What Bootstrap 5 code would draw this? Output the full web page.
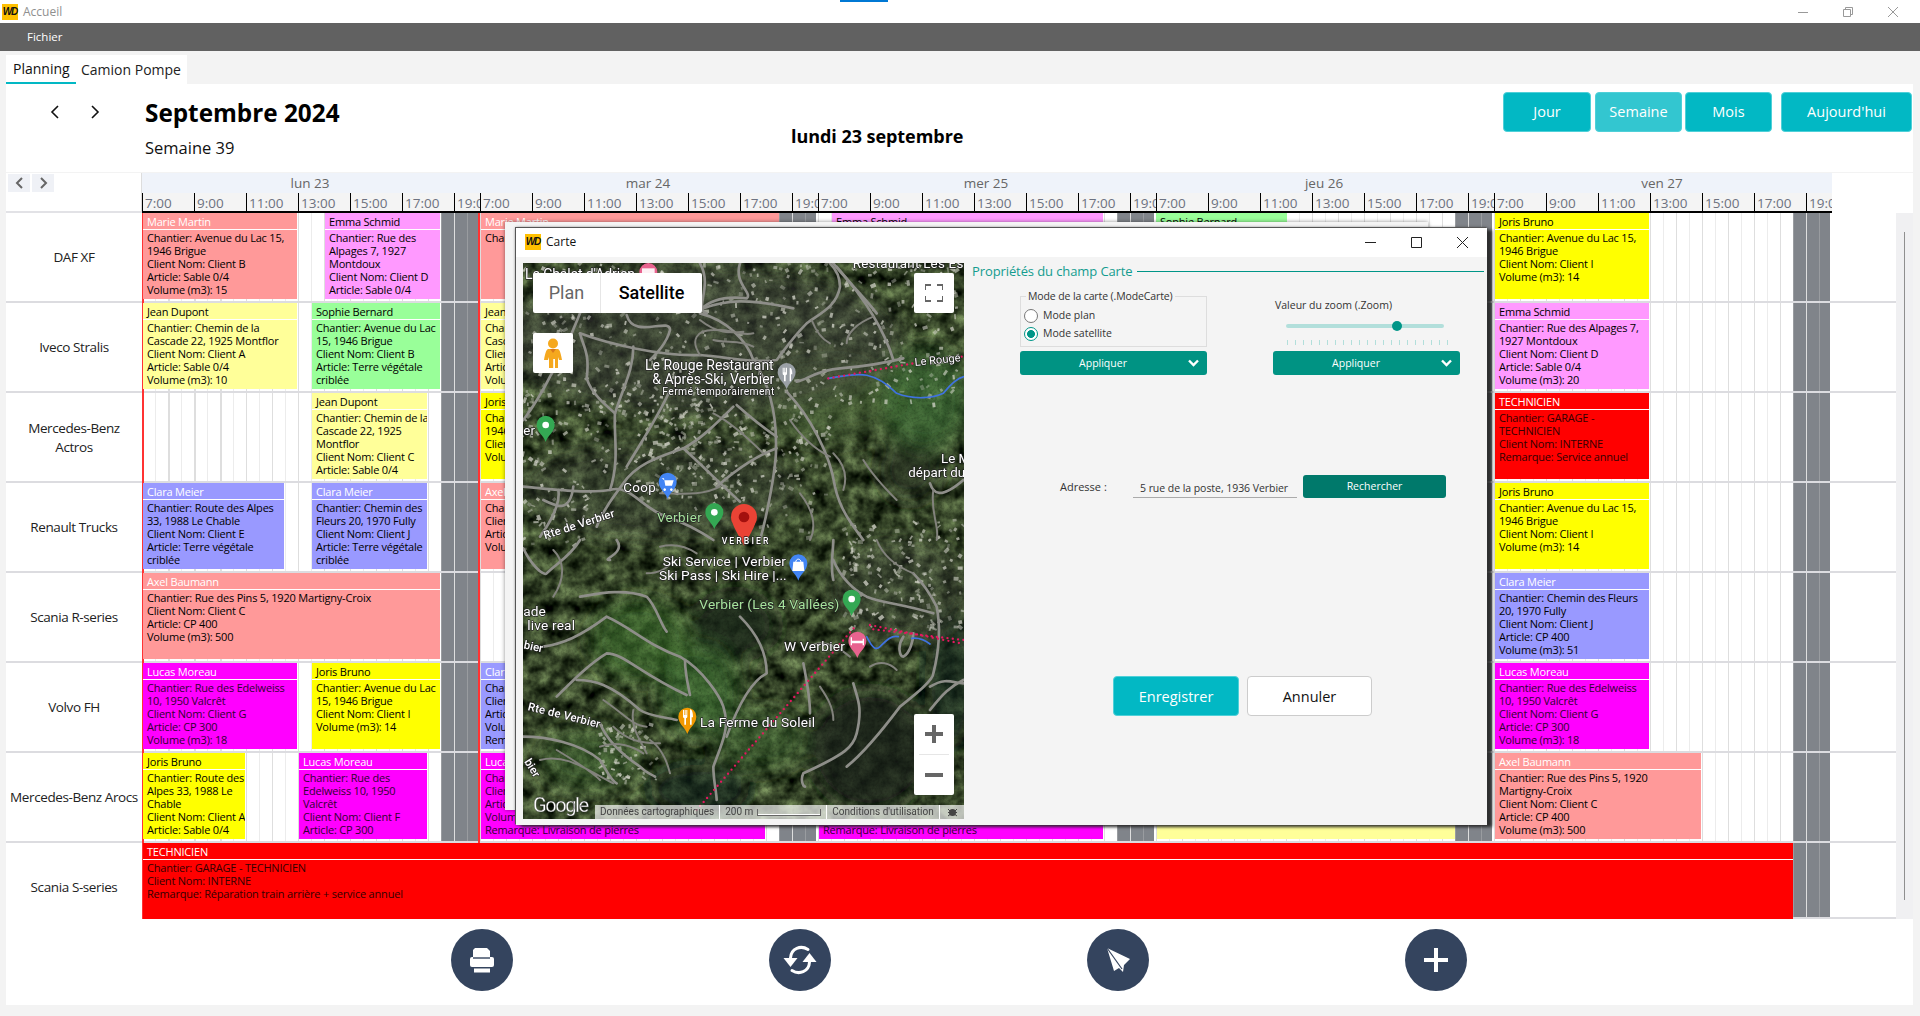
<!doctype html>
<html lang="fr">
<head>
<meta charset="utf-8">
<title>Accueil</title>
<link href="https://cdn.jsdelivr.net/npm/bootstrap@5.3.0/dist/css/bootstrap.min.css" rel="stylesheet">
<style>
html,body{height:1016px;overflow:hidden}
body{background:#f3f3f3;font-family:"Open Sans","Liberation Sans",sans-serif;color:#111;font-size:12px}
.sys-accent{position:absolute;left:840px;top:0;width:48px;height:2px;background:#0078d4}
.win-top{height:23px;background:#fff;padding-left:2px}
.app-logo{display:inline-flex;align-items:center;justify-content:center;width:16px;height:16px;background:#ffc000;font:italic 700 10px/1 "Liberation Sans",sans-serif;color:#111;letter-spacing:-1px}
.win-name{color:#8f8f8f;margin-left:5px;font-size:12px}
.win-ctl{margin-left:auto;gap:35px;padding-right:22px}
.menu-dark{height:28px;background:#616161;color:#fff;padding-left:27px;font-size:11.5px}
.tab-row{height:33px;padding:4px 0 0 6px}
.tab-box{background:#fff;width:181px;height:29px;font-size:14px}
.tab-on{width:70px;padding:3px 0 0 7px;border-bottom:2px solid #02b8c4;color:#111}
.tab-off{padding:4px 0 0 5px;color:#222}
.main-panel{margin-left:6px;width:1907px;height:921px;background:#fff}
.head-zone{height:88px}
.nav-arrows{width:139px;padding:21px 0 0 43px;gap:28px}
.title-col{width:646px}
.big-title{font-size:24.3px;font-weight:700;line-height:34px;margin:12px 0 0;color:#000}
.sub-title{font-size:16.5px;line-height:24px;margin-top:6px;color:#111}
.day-title{font-size:18px;font-weight:700;margin-top:41px;color:#000;line-height:22px;width:174px;white-space:nowrap;letter-spacing:-.05px}
.view-btns{margin-left:auto;padding:8px 1px 0 0}
.view-btn{height:40px;background:#02b8c4;color:#fff;border:1px solid #4fd0d8;border-radius:4px;font-size:14.5px;padding:0;line-height:36px;text-align:center}
.view-btn:hover{background:#02b8c4;color:#fff}
.view-light{background:#33c6d0}
.gantt-head{height:41px;border-top:1px solid #f3f3f3}
.head-left{width:136px;border-right:1px solid #ddd;padding:1px 0 0 2px;gap:2px;border-bottom:2px solid #e2e2e6}
.mini-nav{width:22px;height:18px;background:#eff1f6;display:flex;align-items:center;justify-content:center}
.day-col{width:338px;flex:none}
.day-name{height:20px;background:#eff3fa;color:#666;font-size:13.5px;line-height:21px;text-align:center;padding-right:2px}
.hour-row{height:20px;background:#f4f4f4;border-bottom:2px solid #000}
.hour-cell{width:52px;flex:none;border-left:1.5px solid #000;color:#6d7280;font-size:13.5px;line-height:21px;padding-left:2px;overflow:hidden;white-space:nowrap}
.hour-last{width:26px}
.rows-area{width:1890px}
.g-row{height:90px}
.g-row-end{height:76px}
.g-label{width:136px;flex:none;border-bottom:2px solid #dcdce0;display:flex;align-items:center;justify-content:center;text-align:center;font-size:13.5px;letter-spacing:-.4px;line-height:19px;color:#222;white-space:nowrap;padding-top:1px}
.g-label-low{padding-top:13px;border-bottom:0}
.g-track{width:1754px;flex:none;display:flex;align-items:flex-start;background:
 linear-gradient(#f33 0 0) 0 0/2px 100% no-repeat,
 linear-gradient(#f33 0 0) 336px 0/2px 100% no-repeat,
 linear-gradient(#dcdce0 0 0) 0 100%/100% 2px no-repeat,
 repeating-linear-gradient(90deg,#dedede 0 1.5px,transparent 1.5px 13px,rgba(200,200,200,.35) 13px 14px,transparent 14px 26px) 0 0/1690px 100% no-repeat,
 linear-gradient(#80848a 0 0) 299px 0/37px 100% no-repeat,
 linear-gradient(#80848a 0 0) 637px 0/37px 100% no-repeat,
 linear-gradient(#80848a 0 0) 975px 0/37px 100% no-repeat,
 linear-gradient(#80848a 0 0) 1313px 0/37px 100% no-repeat,
 linear-gradient(#80848a 0 0) 1651px 0/37px 100% no-repeat,
 #fff}
.evt{flex:none;height:86px;overflow:hidden;white-space:nowrap;font-size:11px;letter-spacing:-.2px;line-height:13px;color:#000}
.evt-head{height:17px;line-height:17px;padding-left:4px;border-bottom:1px solid #fff;font-size:11px}
.evt-body{padding:.5px 0 0 4px}
.tone-salmon{background:#ff9999}.tone-salmon .evt-head{color:#fff}
.tone-pink{background:#ff99ff}
.tone-pale{background:#ffff99}
.tone-green{background:#99ff99}
.tone-yellow{background:#ffff00}
.tone-blue{background:#9999ff}.tone-blue .evt-head{color:#fff}
.tone-magenta{background:#ff00ff}.tone-magenta .evt-head{color:#fff}.tone-magenta .evt-body{color:#300030}
.tone-red{background:#ff0000}.tone-red .evt-head{color:#fff}.tone-red .evt-body{color:#300}
.evt-full{height:76px}
.scroll-col{width:17px;background:#f0f0f2;display:flex;justify-content:center;padding-top:19px}
.scroll-line{width:1px;height:668px;background:#8f8f8f}
.fab-zone{height:86px;padding:10px 0 0 445px;gap:256px}
.fab-round{width:62px;height:62px;border-radius:50%;background:#34445e}
/* windows */
.ghost-win{position:absolute;left:505px;top:222px;width:923px;height:588px;background:#f4f4f4;box-shadow:0 0 4px rgba(0,0,0,.45)}
.dlg-win{position:absolute;left:516px;top:228px;width:971px;height:597px;background:#f4f4f4;box-shadow:-1px -1px 0 #555,0 0 3px #333,5px 2px 3px rgba(30,30,30,.85)}
.dlg-top{height:29px;background:#fff;padding:0 0 2px 9px}
.dlg-name{margin-left:5px;font-size:12px;color:#111}
.dlg-ctl{margin-left:auto;gap:35px;padding:2px 19px 0 0}
.map-box{position:relative;width:441px;height:556px;margin:6px 0 0 7px;overflow:hidden;flex:none}
.map-box svg.map-art{display:block}
.map-ctl{position:absolute;background:#fff;border-radius:2px;font-family:Roboto,sans-serif;display:flex;align-items:center;justify-content:center}
.map-type{left:10px;top:10px;width:169px;height:40px;font-size:18px}
.map-plan{width:68px;text-align:center;color:#666;border-right:1px solid #e6e6e6;line-height:40px}
.map-sat{flex:1;text-align:center;color:#000;font-weight:500;line-height:40px}
.map-full{left:391px;top:10px;width:40px;height:40px}
.map-peg{left:10px;top:70px;width:40px;height:40px}
.map-zoom{left:391px;top:451px;width:40px;height:81px;flex-direction:column}
.map-zoom-cell{height:40px;width:100%;display:flex;align-items:center;justify-content:center}
.map-zoom-sep{height:1px;width:30px;background:#e6e6e6}
.map-foot{position:absolute;left:72px;right:0;bottom:0;height:14px;background:rgba(255,255,255,.68);font:10px/14px Roboto,sans-serif;color:#444;white-space:nowrap;display:flex}
.foot-cell{padding:0 5px;border-right:1px solid #fff;display:flex;align-items:center}
.scale-bar{width:64px;height:7px;border:1px solid #666;border-top:0;margin-left:4px;background:linear-gradient(#fff 0 0) 0 100%/100% 1px no-repeat}
.prop-col{width:523px;flex:none}
.prop-head{margin:6px 3px 0 8px;color:#139c8f;font-size:13px;letter-spacing:-.1px;line-height:16px;white-space:nowrap}
.prop-line{height:1px;background:#009688;flex:1;margin-left:4px}
.prop-cols{margin:12px 0 0 56px;gap:66px}
.prop-col-in{width:187px;height:84px}
.mode-box{border:1px solid #ddd;height:56px;margin:0;padding:0 0 0 3px}
.mode-box legend{float:none;width:auto;font-size:10.5px;letter-spacing:-.12px;line-height:1;margin:0 0 5px 2px;padding:0 2px;color:#333}
.opt-line{height:18px;font-size:10.5px;color:#333;gap:5px;white-space:nowrap}
.opt-radio{appearance:none;width:14px;height:14px;border:1px solid #777;border-radius:50%;background:#fff;margin:0;flex:none}
.opt-radio:checked{border-color:#009688;background:radial-gradient(circle,#009688 0 3.6px,#fff 4.3px)}
.apply-btn{height:24px;background:#009383;color:#fff;border:0;border-radius:3px;font-size:10.5px;padding:0;position:relative;margin-top:4px;width:187px}
.apply-btn:hover{background:#009383;color:#fff}
.apply-btn span{position:absolute;left:0;width:166px;text-align:center;top:4px;line-height:16px}
.apply-btn svg{position:absolute;right:8px;top:8px}
.zoom-cap{font-size:10.5px;color:#333;padding:7px 0 0 2px;line-height:14px;white-space:nowrap}
.zoom-track{position:relative;width:158px;height:4px;margin:12px 0 0 13px;background:#b2dfdb;border-radius:2px}
.zoom-thumb{position:absolute;left:106px;top:-3px;width:10px;height:10px;border-radius:50%;background:#009688}
.zoom-ticks{width:161px;height:5px;margin:12px 0 2px 14px;background:repeating-linear-gradient(90deg,#b2dfdb 0 1px,transparent 1px 8px)}
.addr-row{margin:100px 0 0 96px}
.addr-cap{width:73px;font-size:11px;color:#333}
.addr-in{width:164px;height:20px;border:0;border-bottom:1px solid #aaa;background:transparent;font-size:10.5px;letter-spacing:-.05px;padding:0 0 0 7px;color:#333;border-radius:0;margin-top:3px;outline:none;font-family:inherit}
.find-btn{width:143px;height:23px;background:#00796b;color:#fff;border:0;border-radius:3px;font-size:10.5px;padding:0;margin-left:6px}
.find-btn:hover{background:#00796b;color:#fff}
.save-row{margin:178px 0 0 149px;gap:8px}
.save-btn{width:126px;height:40px;background:#02b8c4;color:#fff;border:1px solid #4fd0d8;border-radius:4px;font-size:14.5px;padding:1px 0 0}
.save-btn:hover{background:#02b8c4;color:#fff}
.cancel-btn{width:125px;height:40px;background:#fff;color:#111;border:1px solid #ccc;border-radius:4px;font-size:14.5px;padding:1px 0 0}
.cancel-btn:hover{background:#fff;color:#111}
.map-label{font-family:Roboto,sans-serif;fill:#fff;stroke:#222;stroke-width:4px;paint-order:stroke;stroke-linejoin:round}
.map-green{fill:#a6e39c}
.road-set{fill:none;stroke:#8e8e89;stroke-width:8;stroke-linecap:round;stroke-linejoin:round}
.road-thin{stroke-width:6;stroke:#82827c}
</style>
</head>
<body class="position-relative">
<div class="sys-accent"></div>

<div class="win-top d-flex align-items-center">
  <span class="app-logo">WD</span><span class="win-name">Accueil</span>
  <div class="win-ctl d-flex align-items-center">
    <svg width="10" height="10" viewBox="0 0 10 10"><path d="M0 5.500h10" stroke="#999"/></svg>
    <svg width="10" height="10" viewBox="0 0 10 10" fill="none" stroke="#999"><path d="M.5 2.500h7v7h-7zM2.500 2.500v-2h7v7h-2"/></svg>
    <svg width="10" height="10" viewBox="0 0 10 10"><path d="M0 0l10 10M10 0L0 10" stroke="#999"/></svg>
  </div>
</div>
<div class="menu-dark d-flex align-items-center">Fichier</div>
<div class="tab-row">
  <div class="tab-box d-flex">
    <div class="tab-on">Planning</div>
    <div class="tab-off">Camion Pompe</div>
  </div>
</div>

<div class="main-panel">
  <div class="head-zone d-flex">
    <div class="nav-arrows d-flex align-items-start">
      <svg width="12" height="14" viewBox="0 0 12 14" fill="none" stroke="#111" stroke-width="1.6"><path d="M9 1L3 7l6 6"/></svg>
      <svg width="12" height="14" viewBox="0 0 12 14" fill="none" stroke="#111" stroke-width="1.6"><path d="M3 1l6 6-6 6"/></svg>
    </div>
    <div class="title-col">
      <div class="big-title">Septembre 2024</div>
      <div class="sub-title">Semaine 39</div>
    </div>
    <div class="day-title">lundi 23 septembre</div>
    <div class="view-btns d-flex">
      <button class="btn view-btn" style="width:88px">Jour</button>
      <button class="btn view-btn view-light ms-1" style="width:87px">Semaine</button>
      <button class="btn view-btn" style="width:87px;margin-left:3px">Mois</button>
      <button class="btn view-btn" style="width:131px;margin-left:9px">Aujourd'hui</button>
    </div>
  </div>

  <div class="gantt-head d-flex">
    <div class="head-left d-flex align-items-start">
      <span class="mini-nav"><svg width="9" height="12" viewBox="0 0 9 12" fill="none" stroke="#666" stroke-width="2"><path d="M7 1L2 6l5 5"/></svg></span>
      <span class="mini-nav"><svg width="9" height="12" viewBox="0 0 9 12" fill="none" stroke="#666" stroke-width="2"><path d="M2 1l5 5-5 5"/></svg></span>
    </div>
    <div class="day-col"><div class="day-name">lun 23</div><div class="hour-row d-flex"><div class="hour-cell">7:00</div><div class="hour-cell">9:00</div><div class="hour-cell">11:00</div><div class="hour-cell">13:00</div><div class="hour-cell">15:00</div><div class="hour-cell">17:00</div><div class="hour-cell hour-last">19:00</div></div></div>
    <div class="day-col"><div class="day-name">mar 24</div><div class="hour-row d-flex"><div class="hour-cell">7:00</div><div class="hour-cell">9:00</div><div class="hour-cell">11:00</div><div class="hour-cell">13:00</div><div class="hour-cell">15:00</div><div class="hour-cell">17:00</div><div class="hour-cell hour-last">19:00</div></div></div>
    <div class="day-col"><div class="day-name">mer 25</div><div class="hour-row d-flex"><div class="hour-cell">7:00</div><div class="hour-cell">9:00</div><div class="hour-cell">11:00</div><div class="hour-cell">13:00</div><div class="hour-cell">15:00</div><div class="hour-cell">17:00</div><div class="hour-cell hour-last">19:00</div></div></div>
    <div class="day-col"><div class="day-name">jeu 26</div><div class="hour-row d-flex"><div class="hour-cell">7:00</div><div class="hour-cell">9:00</div><div class="hour-cell">11:00</div><div class="hour-cell">13:00</div><div class="hour-cell">15:00</div><div class="hour-cell">17:00</div><div class="hour-cell hour-last">19:00</div></div></div>
    <div class="day-col"><div class="day-name">ven 27</div><div class="hour-row d-flex"><div class="hour-cell">7:00</div><div class="hour-cell">9:00</div><div class="hour-cell">11:00</div><div class="hour-cell">13:00</div><div class="hour-cell">15:00</div><div class="hour-cell">17:00</div><div class="hour-cell hour-last">19:00</div></div></div>
  </div>

  <div class="d-flex">
    <div class="rows-area">

      <div class="g-row d-flex">
        <div class="g-label">DAF XF</div>
        <div class="g-track">
          <div class="evt tone-salmon" style="width:154px;margin-left:1px"><div class="evt-head">Marie Martin</div><div class="evt-body">Chantier: Avenue du Lac 15,<br>1946 Brigue<br>Client Nom: Client B<br>Article: Sable 0/4<br>Volume (m3): 15</div></div>
          <div class="evt tone-pink" style="width:115px;margin-left:28px"><div class="evt-head">Emma Schmid</div><div class="evt-body">Chantier: Rue des<br>Alpages 7, 1927<br>Montdoux<br>Client Nom: Client D<br>Article: Sable 0/4</div></div>
          <div class="evt tone-salmon" style="width:298px;margin-left:41px"><div class="evt-head">Marie Martin</div><div class="evt-body">Chantier: Avenue du Lac 15, 1946 Brigue</div></div>
          <div class="evt tone-pink" style="width:271px;margin-left:53px"><div class="evt-head">Emma Schmid</div></div>
          <div class="evt tone-green" style="width:131px;margin-left:53px"><div class="evt-head">Sophie Bernard</div></div>
          <div class="evt tone-yellow" style="width:154px;margin-left:208px"><div class="evt-head">Joris Bruno</div><div class="evt-body">Chantier: Avenue du Lac 15,<br>1946 Brigue<br>Client Nom: Client I<br>Volume (m3): 14</div></div>
        </div>
      </div>

      <div class="g-row d-flex">
        <div class="g-label">Iveco Stralis</div>
        <div class="g-track">
          <div class="evt tone-pale" style="width:154px;margin-left:1px"><div class="evt-head">Jean Dupont</div><div class="evt-body">Chantier: Chemin de la<br>Cascade 22, 1925 Montflor<br>Client Nom: Client A<br>Article: Sable 0/4<br>Volume (m3): 10</div></div>
          <div class="evt tone-green" style="width:128px;margin-left:15px"><div class="evt-head">Sophie Bernard</div><div class="evt-body">Chantier: Avenue du Lac<br>15, 1946 Brigue<br>Client Nom: Client B<br>Article: Terre végétale<br>criblée</div></div>
          <div class="evt tone-pale" style="width:219px;margin-left:41px"><div class="evt-head">Jean Dupont</div><div class="evt-body">Chantier: Chemin de la<br>Cascade 22, 1925 Montflor<br>Client Nom: Client A<br>Article: Sable 0/4<br>Volume (m3): 10</div></div>
          <div class="evt tone-pink" style="width:154px;margin-left:795px"><div class="evt-head">Emma Schmid</div><div class="evt-body">Chantier: Rue des Alpages 7,<br>1927 Montdoux<br>Client Nom: Client D<br>Article: Sable 0/4<br>Volume (m3): 20</div></div>
        </div>
      </div>

      <div class="g-row d-flex">
        <div class="g-label">Mercedes-Benz<br>Actros</div>
        <div class="g-track">
          <div class="evt tone-pale" style="width:115px;margin-left:170px"><div class="evt-head">Jean Dupont</div><div class="evt-body">Chantier: Chemin de la<br>Cascade 22, 1925<br>Montflor<br>Client Nom: Client C<br>Article: Sable 0/4</div></div>
          <div class="evt tone-yellow" style="width:219px;margin-left:54px"><div class="evt-head">Joris Bruno</div><div class="evt-body">Chantier: Avenue du Lac 15,<br>1946 Brigue<br>Client Nom: Client I<br>Volume (m3): 14</div></div>
          <div class="evt tone-red" style="width:154px;margin-left:795px"><div class="evt-head">TECHNICIEN</div><div class="evt-body">Chantier: GARAGE -<br>TECHNICIEN<br>Client Nom: INTERNE<br>Remarque: Service annuel</div></div>
        </div>
      </div>

      <div class="g-row d-flex">
        <div class="g-label">Renault Trucks</div>
        <div class="g-track">
          <div class="evt tone-blue" style="width:141px;margin-left:1px"><div class="evt-head">Clara Meier</div><div class="evt-body">Chantier: Route des Alpes<br>33, 1988 Le Chable<br>Client Nom: Client E<br>Article: Terre végétale<br>criblée</div></div>
          <div class="evt tone-blue" style="width:115px;margin-left:28px"><div class="evt-head">Clara Meier</div><div class="evt-body">Chantier: Chemin des<br>Fleurs 20, 1970 Fully<br>Client Nom: Client J<br>Article: Terre végétale<br>criblée</div></div>
          <div class="evt tone-salmon" style="width:219px;margin-left:54px"><div class="evt-head">Axel Baumann</div><div class="evt-body">Chantier: Rue des Pins 5<br>Client Nom: Client C<br>Article: CP 400<br>Volume (m3): 500</div></div>
          <div class="evt tone-yellow" style="width:154px;margin-left:795px"><div class="evt-head">Joris Bruno</div><div class="evt-body">Chantier: Avenue du Lac 15,<br>1946 Brigue<br>Client Nom: Client I<br>Volume (m3): 14</div></div>
        </div>
      </div>

      <div class="g-row d-flex">
        <div class="g-label">Scania R-series</div>
        <div class="g-track">
          <div class="evt tone-salmon" style="width:297px;margin-left:1px"><div class="evt-head">Axel Baumann</div><div class="evt-body">Chantier: Rue des Pins 5, 1920 Martigny-Croix<br>Client Nom: Client C<br>Article: CP 400<br>Volume (m3): 500</div></div>
          <div class="evt tone-blue" style="width:154px;margin-left:1055px"><div class="evt-head">Clara Meier</div><div class="evt-body">Chantier: Chemin des Fleurs<br>20, 1970 Fully<br>Client Nom: Client J<br>Article: CP 400<br>Volume (m3): 51</div></div>
        </div>
      </div>

      <div class="g-row d-flex">
        <div class="g-label">Volvo FH</div>
        <div class="g-track">
          <div class="evt tone-magenta" style="width:154px;margin-left:1px"><div class="evt-head">Lucas Moreau</div><div class="evt-body">Chantier: Rue des Edelweiss<br>10, 1950 Valcrêt<br>Client Nom: Client G<br>Article: CP 300<br>Volume (m3): 18</div></div>
          <div class="evt tone-yellow" style="width:128px;margin-left:15px"><div class="evt-head">Joris Bruno</div><div class="evt-body">Chantier: Avenue du Lac<br>15, 1946 Brigue<br>Client Nom: Client I<br>Volume (m3): 14</div></div>
          <div class="evt tone-blue" style="width:219px;margin-left:41px"><div class="evt-head">Clara Meier</div><div class="evt-body">Chantier: Chemin des Fleurs<br>Client Nom: Client J<br>Article: CP 400<br>Volume (m3): 51<br>Remarque: Livraison</div></div>
          <div class="evt tone-magenta" style="width:154px;margin-left:795px"><div class="evt-head">Lucas Moreau</div><div class="evt-body">Chantier: Rue des Edelweiss<br>10, 1950 Valcrêt<br>Client Nom: Client G<br>Article: CP 300<br>Volume (m3): 18</div></div>
        </div>
      </div>

      <div class="g-row d-flex">
        <div class="g-label">Mercedes-Benz Arocs</div>
        <div class="g-track">
          <div class="evt tone-yellow" style="width:102px;margin-left:1px"><div class="evt-head">Joris Bruno</div><div class="evt-body">Chantier: Route des<br>Alpes 33, 1988 Le<br>Chable<br>Client Nom: Client A<br>Article: Sable 0/4</div></div>
          <div class="evt tone-magenta" style="width:128px;margin-left:54px"><div class="evt-head">Lucas Moreau</div><div class="evt-body">Chantier: Rue des<br>Edelweiss 10, 1950<br>Valcrêt<br>Client Nom: Client F<br>Article: CP 300</div></div>
          <div class="evt tone-magenta" style="width:284px;margin-left:54px"><div class="evt-head">Lucas Moreau</div><div class="evt-body">Chantier: Rue des Edelweiss<br>Client Nom: Client G<br>Article: CP 300<br>Volume (m3): 18<br>Remarque: Livraison de pierres</div></div>
          <div class="evt tone-magenta" style="width:284px;margin-left:54px"><div class="evt-head">Lucas Moreau</div><div class="evt-body">Chantier: Rue des Edelweiss<br>Client Nom: Client G<br>Article: CP 300<br>Volume (m3): 18<br>Remarque: Livraison de pierres</div></div>
          <div class="evt tone-pale" style="width:298px;margin-left:54px"><div class="evt-head">Jean Dupont</div></div>
          <div class="evt tone-salmon" style="width:206px;margin-left:40px"><div class="evt-head">Axel Baumann</div><div class="evt-body">Chantier: Rue des Pins 5, 1920<br>Martigny-Croix<br>Client Nom: Client C<br>Article: CP 400<br>Volume (m3): 500</div></div>
        </div>
      </div>

      <div class="g-row-end d-flex">
        <div class="g-label g-label-low">Scania S-series</div>
        <div class="g-track">
          <div class="evt evt-full tone-red" style="width:1650px;margin-left:1px"><div class="evt-head">TECHNICIEN</div><div class="evt-body">Chantier: GARAGE - TECHNICIEN<br>Client Nom: INTERNE<br>Remarque: Réparation train arrière + service annuel</div></div>
        </div>
      </div>
    </div>
    <div class="scroll-col"><div class="scroll-line"></div></div>
  </div>

  <div class="fab-zone d-flex align-items-start">
    <div class="fab-round d-flex align-items-center justify-content-center">
      <svg width="26" height="26" viewBox="0 0 26 26"><path d="M6 1h12l3 3v6H4V3z" fill="#fff"/><rect x="1" y="10" width="24" height="10" rx="2" fill="#fff"/><path d="M4 11h17" stroke="#34445e" stroke-width="1.4"/><rect x="5" y="21.500" width="16" height="4" fill="#fff"/></svg>
    </div>
    <div class="fab-round d-flex align-items-center justify-content-center">
      <svg width="40" height="32" viewBox="0 0 40 32" fill="none"><path d="M28 5.500C21 1 11 4 10.500 14" stroke="#fff" stroke-width="3" stroke-linecap="round"/><path d="M3.500 14h14l-7 9z" fill="#fff"/><path d="M12 26.500C19 31 29 28 29.500 18" stroke="#fff" stroke-width="3" stroke-linecap="round"/><path d="M22.500 18h14l-7-9z" fill="#fff"/></svg>
    </div>
    <div class="fab-round d-flex align-items-center justify-content-center">
      <svg width="28" height="28" viewBox="0 0 28 28"><path d="M3 2l23 11-6 6-1 7-4-4-5 3z" fill="#fff"/><path d="M3 2l15 21" stroke="#34445e" stroke-width="1.200"/></svg>
    </div>
    <div class="fab-round d-flex align-items-center justify-content-center">
      <svg width="24" height="24" viewBox="0 0 24 24"><path d="M10 0h4v10h10v4H14v10h-4V14H0v-4h10z" fill="#fff"/></svg>
    </div>
  </div>
</div>

<!-- window behind the dialog -->
<div class="ghost-win"></div>

<!-- Carte dialog -->
<div class="dlg-win">
  <div class="dlg-top d-flex align-items-center">
    <span class="app-logo">WD</span><span class="dlg-name">Carte</span>
    <div class="dlg-ctl d-flex align-items-center">
      <svg width="11" height="11" viewBox="0 0 11 11"><path d="M0 5.500h11" stroke="#222"/></svg>
      <svg width="11" height="11" viewBox="0 0 11 11"><path d="M.5.500h10v10H.5z" fill="none" stroke="#222"/></svg>
      <svg width="11" height="11" viewBox="0 0 11 11"><path d="M0 0l11 11M11 0L0 11" stroke="#222"/></svg>
    </div>
  </div>
  <div class="d-flex">
    <div class="map-box">
      <svg class="map-art" id="mapArt" width="441" height="556" viewBox="523 263 441 556" xmlns="http://www.w3.org/2000/svg">
        <defs>
          <filter id="satNoise" x="0" y="0" width="100%" height="100%" color-interpolation-filters="sRGB">
            <feTurbulence type="fractalNoise" baseFrequency=".07" numOctaves="3" seed="11"/>
            <feColorMatrix values=".7 0 0 0 -.13  .8 0 0 0 -.12  .55 0 0 0 -.11  0 0 0 0 1"/>
          </filter>
          <filter id="softBlur" x="-30%" y="-30%" width="160%" height="160%"><feGaussianBlur stdDeviation="10"/></filter>
          <filter id="fineNoise" x="0" y="0" width="100%" height="100%" color-interpolation-filters="sRGB">
            <feTurbulence type="fractalNoise" baseFrequency=".4" numOctaves="2" seed="4"/>
            <feColorMatrix values="0 0 0 0 0  0 0 0 0 0  0 0 0 0 0  1.600 0 0 0 -.7"/>
          </filter>
        </defs>
        <rect x="523" y="263" width="441" height="556" filter="url(#satNoise)"/>
        <g filter="url(#softBlur)">
          <ellipse cx="830" cy="400" rx="70" ry="40" fill="#4f6a3c" opacity=".6"/>
          <ellipse cx="925" cy="400" rx="45" ry="50" fill="#3f6f36" opacity=".7"/>
          <ellipse cx="640" cy="640" rx="50" ry="40" fill="#3d6f2f" opacity=".6"/>
          <ellipse cx="700" cy="690" rx="40" ry="45" fill="#3d7330" opacity=".6"/>
          <ellipse cx="590" cy="760" rx="50" ry="30" fill="#46703a" opacity=".5"/>
          <ellipse cx="760" cy="740" rx="45" ry="30" fill="#3d6f30" opacity=".45"/>
          <ellipse cx="735" cy="625" rx="42" ry="32" fill="#1a281c" opacity=".8"/>
          <ellipse cx="870" cy="750" rx="60" ry="60" fill="#152219" opacity=".8"/>
          <ellipse cx="700" cy="790" rx="50" ry="25" fill="#16251b" opacity=".7"/>
          <ellipse cx="950" cy="680" rx="25" ry="70" fill="#16251b" opacity=".65"/>
          <ellipse cx="910" cy="470" rx="30" ry="30" fill="#2a3522" opacity=".7"/>
          <ellipse cx="700" cy="340" rx="200" ry="75" fill="#45493f" opacity=".55"/>
          <ellipse cx="660" cy="490" rx="140" ry="50" fill="#45493f" opacity=".4"/>
          <ellipse cx="900" cy="590" rx="70" ry="50" fill="#45493f" opacity=".4"/>
        </g>
        <rect x="523" y="263" width="441" height="556" filter="url(#fineNoise)" opacity=".28"/>
        <g id="houseLayer"></g>

        <g transform="translate(500 200) scale(.33333)">
          <path class="road-set" d="M600 340C680 360 740 420 760 480C800 540 830 620 828 740C830 800 800 950 780 1020"/>
          <path class="road-set" d="M610 325C680 300 740 295 880 325M240 400C320 430 480 470 600 465C680 470 740 490 830 480C860 440 880 410 920 370C960 340 1010 320 1020 260C1020 220 1000 200 990 190"/>
          <path class="road-set" d="M1010 200C1080 280 1150 380 1180 480M890 545C920 540 950 510 1020 505C1090 500 1150 490 1210 475"/>
          <path class="road-set" d="M860 575C930 650 990 760 1005 860C1020 930 1060 980 1090 1020"/>
          <path class="road-set" d="M400 440C400 510 370 560 345 640C340 700 360 780 330 870"/>
          <path class="road-set" d="M70 860C170 870 270 880 330 870C390 850 430 930 500 950C560 970 610 1000 640 1020"/>
          <path class="road-set" d="M700 620C650 670 600 720 550 745C480 770 410 790 370 850C340 890 310 930 290 980"/>
          <path class="road-set" d="M710 615C760 660 800 690 830 710M550 745C610 800 670 860 720 905M830 745C790 760 730 790 650 860"/>
          <path class="road-set" d="M240 340C220 390 180 480 150 530C130 570 100 620 70 660M240 400C250 440 270 460 260 535C275 580 310 610 345 640"/>
          <path class="road-set" d="M510 570C480 640 440 700 380 800M1290 850C1300 880 1320 900 1390 840M600 190C640 260 580 330 620 340M380 345C400 420 510 350 510 390C500 430 470 460 450 480"/>
          <path class="road-set" d="M720 190C700 250 760 280 740 295C700 290 640 290 600 330M1000 190C1040 240 1100 300 1130 340"/>
          <path class="road-set" d="M130 900C170 920 210 940 220 860M175 870C180 900 170 940 120 1010"/>
          <path class="road-set road-thin" d="M600 360C650 400 690 400 730 395M600 465C570 420 590 390 640 390C690 385 720 410 760 400M640 420C680 430 720 420 760 440M935 360C950 400 970 420 990 430M1120 350C1070 370 1040 400 1040 430M640 640C700 670 760 730 790 760M870 660C910 720 950 750 990 770M480 880C540 880 600 890 660 860M1000 760C1040 800 1040 840 1030 870M1300 870C1290 940 1320 980 1310 1020M1090 780C1120 830 1160 870 1190 900M900 880C940 930 950 980 930 1020"/>
        </g>
        <g transform="translate(500 540) scale(.33333)">
          <path class="road-set" d="M130 320C190 310 240 290 320 230C390 260 450 320 540 350C610 390 660 470 670 500C690 560 670 600 640 680C640 720 650 760 650 780"/>
          <path class="road-set" d="M240 170C300 160 370 145 440 170C470 200 480 250 500 275M170 470C220 420 270 370 320 340C370 340 420 400 560 465M555 360C555 400 565 440 570 465"/>
          <path class="road-set" d="M70 590C140 590 240 610 300 660C320 690 330 720 350 730M230 420C280 420 330 430 420 510C450 530 490 530 530 540M300 550C320 600 360 640 420 680C440 700 450 700 465 710"/>
          <path class="road-set" d="M720 230C780 290 800 350 800 400C760 420 720 480 680 590M910 370C920 420 930 470 930 520M1060 430C1070 470 1090 500 1070 580C1060 620 1040 640 910 700C900 720 910 740 915 740"/>
          <path class="road-set" d="M1040 680C1090 640 1140 580 1200 500C1250 460 1300 420 1300 400C1320 320 1320 250 1310 200C1290 160 1260 120 1240 100M1000 60C1020 110 1060 150 1100 170C1150 190 1200 190 1300 220"/>
          <path class="road-set" d="M1210 290C1190 320 1200 350 1210 350C1230 340 1240 300 1240 280M70 25C90 70 130 110 140 100C170 70 210 50 240 0M350 0C380 40 300 60 330 60"/>
          <path class="road-set" d="M1000 0C1000 30 990 80 1000 120M1290 440C1340 410 1360 430 1390 430M1290 510C1330 460 1350 440 1390 420"/>
          <path class="road-set road-thin" d="M340 560C380 600 420 610 480 610M310 480C370 520 400 560 440 560M300 620C350 600 400 620 430 640M400 510C390 560 420 600 440 640M450 600C480 620 500 660 510 700M120 660C200 640 260 690 340 730M170 630C220 660 270 690 300 720M930 320C960 300 1000 310 1050 350M960 440C980 470 1000 500 1000 540M1110 380C1140 360 1170 370 1190 390M1130 0C1150 50 1190 80 1240 100M160 30C190 60 200 110 160 170M480 20C520 10 560 20 590 40M520 60C500 90 470 100 440 100"/>
        </g>

        <g transform="translate(500 200) scale(.33333)" fill="none" stroke-linecap="round">
          <path d="M985 535C1060 525 1110 500 1190 580C1240 600 1300 595 1330 580C1350 555 1370 535 1392 530" stroke="#3f72e0" stroke-width="5"/>
          <path d="M985 535L1240 490M1385 470L1392 470" stroke="#e4175f" stroke-width="7" stroke-dasharray="0 16"/>
        </g>
        <g transform="translate(500 540) scale(.33333)" fill="none" stroke-linecap="round">
          <path d="M1100 290C1120 330 1130 330 1140 320C1160 300 1175 285 1195 290M1235 295C1260 292 1275 300 1290 312" stroke="#3f72e0" stroke-width="5"/>
          <path d="M590 810L1065 260" stroke="#e4175f" stroke-width="7" stroke-dasharray="0 16"/>
          <path d="M1110 255L1392 312M1120 268L1392 300" stroke="#e4175f" stroke-width="7" stroke-dasharray="0 16"/>
        </g>

        <defs><path id="pinShape" d="M0 0C-6-20-27-30-27-52A27 27 0 1 1 27-52C27-30 6-20 0 0Z"/></defs>
        <g transform="translate(500 200) scale(.33333)">
          <use href="#pinShape" x="445" y="268" fill="#e8638f"/><path d="M426 205h38v14h-38z" fill="#fff" opacity=".9"/>
          <use href="#pinShape" x="137" y="726" fill="#34a853"/><circle cx="137" cy="675" r="10" fill="#fff"/>
          <use href="#pinShape" x="503" y="897" fill="#4285f4"/><path d="M485 835h7l4 22h20l5-16h-28M494 865a4 4 0 1 0 .1 0M514 865a4 4 0 1 0 .1 0" fill="#fff"/>
          <use href="#pinShape" x="643" y="988" fill="#34a853"/><circle cx="643" cy="937" r="10" fill="#fff"/>
          <use href="#pinShape" x="860" y="568" fill="#9aa0a6"/><path d="M848 503v18a5 5 0 0 0 4 5v18h5v-18a5 5 0 0 0 4-5v-18h-3v14h-2v-14h-3v14h-2v-14zM869 503c6 0 8 10 8 20h-4v21h-4z" fill="#fff"/>
        </g>
        <circle cx="744" cy="517" r="13" fill="#ea4335"/>
        <path d="M733 524c3 9 8 14 11 22 3-8 8-13 11-22z" fill="#ea4335"/><circle cx="744" cy="517" r="5.300" fill="#a3100e"/>
        <g transform="translate(500 540) scale(.33333)">
          <use href="#pinShape" x="895" y="122" fill="#4285f4"/><path d="M880 65h30l3 28h-36z" fill="#fff"/><path d="M887 68c0-14 16-14 16 0" fill="none" stroke="#fff" stroke-width="3"/>
          <use href="#pinShape" x="1055" y="228" fill="#34a853"/><circle cx="1055" cy="177" r="10" fill="#fff"/>
          <use href="#pinShape" x="1072" y="354" fill="#e8638f"/><path d="M1052 292h4v10h32v-6h4v20h-4v-6h-32v6h-4z" fill="#fff"/>
          <use href="#pinShape" x="562" y="582" fill="#f29900"/><path d="M549 510v20a5 5 0 0 0 4 5v19h5v-19a5 5 0 0 0 4-5v-20h-3v15h-2v-15h-3v15h-2v-15zM570 508c7 0 9 12 9 24h-4v22h-5z" fill="#fff"/>
        </g>

        <g transform="translate(500 200) scale(.33333)">
          <text class="map-label" x="75" y="238" font-size="42" textLength="330">Le Chalet d'Adrien</text>
          <text class="map-label" x="1058" y="205" font-size="40" textLength="332">Restaurant Les Es</text>
          <text class="map-label" x="435" y="510" font-size="42" textLength="386">Le Rouge Restaurant</text>
          <text class="map-label" x="457" y="552" font-size="42" textLength="366">&amp; Après-Ski, Verbier</text>
          <text class="map-label" x="487" y="585" font-size="31" textLength="336">Fermé temporairement</text>
          <text class="map-label" x="1245" y="498" font-size="33" textLength="138" transform="rotate(-6 1245 498)">Le Rouge</text>
          <text class="map-label" x="1323" y="790" font-size="40">Le M</text>
          <text class="map-label" x="1225" y="832" font-size="40">départ du</text>
          <text class="map-label" x="370" y="876" font-size="40" textLength="97">Coop</text>
          <text class="map-label map-green" x="471" y="965" font-size="40" textLength="134">Verbier</text>
          <text class="map-label" x="70" y="705" font-size="40">er</text>
          <text class="map-label" x="135" y="1018" font-size="34" textLength="222" font-weight="500" transform="rotate(-18 135 1018)">Rte de Verbier</text>
        </g>
        <g transform="translate(500 540) scale(.33333)">
          <text class="map-label" x="665" y="12" font-size="26" font-weight="500" textLength="140">VERBIER</text>
          <text class="map-label" x="488" y="78" font-size="41" textLength="370">Ski Service | Verbier</text>
          <text class="map-label" x="477" y="120" font-size="41" textLength="383">Ski Pass | Ski Hire |...</text>
          <text class="map-label map-green" x="598" y="207" font-size="41" textLength="420">Verbier (Les 4 Vallées)</text>
          <text class="map-label" x="852" y="333" font-size="41" textLength="183">W Verbier</text>
          <text class="map-label" x="600" y="560" font-size="41" textLength="345">La Ferme du Soleil</text>
          <text class="map-label" x="70" y="228" font-size="41">ade</text>
          <text class="map-label" x="82" y="270" font-size="41" textLength="143">live real</text>
          <text class="map-label" x="70" y="325" font-size="34" font-weight="500" transform="rotate(12 70 325)">bier</text>
          <text class="map-label" x="82" y="510" font-size="34" font-weight="500" textLength="222" transform="rotate(14 82 510)">Rte de Verbier</text>
          <text class="map-label" x="72" y="665" font-size="34" font-weight="500" transform="rotate(58 72 665)">bier</text>
        </g>
        <text x="533" y="812" font-family="Roboto,sans-serif" font-size="20" fill="#fff" stroke="#333" stroke-width=".3" textLength="56">Google</text>
      </svg>

      <div class="map-ctl map-type"><div class="map-plan">Plan</div><div class="map-sat">Satellite</div></div>
      <div class="map-ctl map-full">
        <svg width="18" height="18" viewBox="0 0 18 18" fill="none" stroke="#666" stroke-width="2"><path d="M0 6V1h6M12 1h6v5M18 12v5h-6M6 17H0v-5"/></svg>
      </div>
      <div class="map-ctl map-peg">
        <svg width="18" height="30" viewBox="0 0 18 30"><circle cx="9" cy="5.500" r="5" fill="#f5a81e"/><path d="M4 11h10c2 1 3 5 4 11h-3l-1-3v11h-3V21h-1.800v9H5V19l-1 3H0C1 16 2 12 4 11z" fill="#f5a81e"/><path d="M6 11h6l-3 4z" fill="#d9791c"/></svg>
      </div>
      <div class="map-ctl map-zoom">
        <div class="map-zoom-cell"><svg width="18" height="18" viewBox="0 0 18 18"><path d="M7 0h4v7h7v4h-7v7H7v-7H0V7h7z" fill="#666"/></svg></div>
        <div class="map-zoom-sep"></div>
        <div class="map-zoom-cell"><svg width="18" height="4" viewBox="0 0 18 4"><path d="M0 0h18v4H0z" fill="#666"/></svg></div>
      </div>
      <div class="map-foot">
        <div class="foot-cell">Données cartographiques</div>
        <div class="foot-cell">200 m<span class="scale-bar"></span></div>
        <div class="foot-cell">Conditions d'utilisation</div>
        <div class="foot-cell border-0 ps-2"><svg width="9" height="10" viewBox="0 0 9 10"><circle cx="4.500" cy="5.500" r="3.500" fill="#444"/><path d="M0 2l2 2M9 2L7 4M0 5.500h2M7 5.500h2M0 9l2-1.500M9 9L7 7.500" stroke="#444"/></svg></div>
      </div>
    </div>

    <div class="prop-col">
      <div class="prop-head d-flex align-items-center">Propriétés du champ Carte<span class="prop-line"></span></div>
      <div class="prop-cols d-flex">
        <div class="prop-col-in">
          <fieldset class="mode-box">
            <legend>Mode de la carte (.ModeCarte)</legend>
            <label class="opt-line d-flex align-items-center"><input class="opt-radio" type="radio" name="mc">Mode plan</label>
            <label class="opt-line d-flex align-items-center"><input class="opt-radio" type="radio" name="mc" checked>Mode satellite</label>
          </fieldset>
          <button class="btn apply-btn"><span>Appliquer</span><svg width="11" height="8" viewBox="0 0 11 8" fill="none" stroke="#fff" stroke-width="2.400"><path d="M1 1.500l4.500 4.500L10 1.500"/></svg></button>
        </div>
        <div class="prop-col-in">
          <div class="zoom-cap">Valeur du zoom (.Zoom)</div>
          <div class="zoom-track"><div class="zoom-thumb"></div></div>
          <div class="zoom-ticks"></div>
          <button class="btn apply-btn"><span>Appliquer</span><svg width="11" height="8" viewBox="0 0 11 8" fill="none" stroke="#fff" stroke-width="2.400"><path d="M1 1.500l4.500 4.500L10 1.500"/></svg></button>
        </div>
      </div>
      <div class="addr-row d-flex align-items-start">
        <div class="addr-cap pt-1">Adresse :</div>
        <input class="addr-in" value="5 rue de la poste, 1936 Verbier">
        <button class="btn find-btn">Rechercher</button>
      </div>
      <div class="save-row d-flex">
        <button class="btn save-btn">Enregistrer</button>
        <button class="btn cancel-btn">Annuler</button>
      </div>
    </div>
  </div>
</div>

<script>
// building specks on the satellite map, from a seeded generator
(function(){
  var seed=93, r=function(){seed=(seed*16807)%2147483647;return seed/2147483647;};
  var zones=[[523,263,441,140,420],[523,400,200,70,110],[640,400,190,100,170],[845,520,119,110,150],[650,410,170,130,60],[600,720,60,60,60],[523,480,70,70,50]];
  var out='';
  zones.forEach(function(z){
    for(var i=0;i<z[4];i++){
      var x=z[0]+r()*z[2], y=z[1]+r()*z[3], w=2+r()*3.5, h=1.5+r()*2.5, a=Math.round(r()*180), o=(.3+r()*.45).toFixed(2);
      out+='<rect x="'+x.toFixed(1)+'" y="'+y.toFixed(1)+'" width="'+w.toFixed(1)+'" height="'+h.toFixed(1)+'" fill="#d9d9cf" opacity="'+o+'" transform="rotate('+a+' '+x.toFixed(1)+' '+y.toFixed(1)+')"/>';
    }
  });
  document.getElementById('houseLayer').innerHTML=out;
})();
</script>
<script src="https://cdn.jsdelivr.net/npm/bootstrap@5.3.0/dist/js/bootstrap.bundle.min.js"></script>
</body>
</html>
